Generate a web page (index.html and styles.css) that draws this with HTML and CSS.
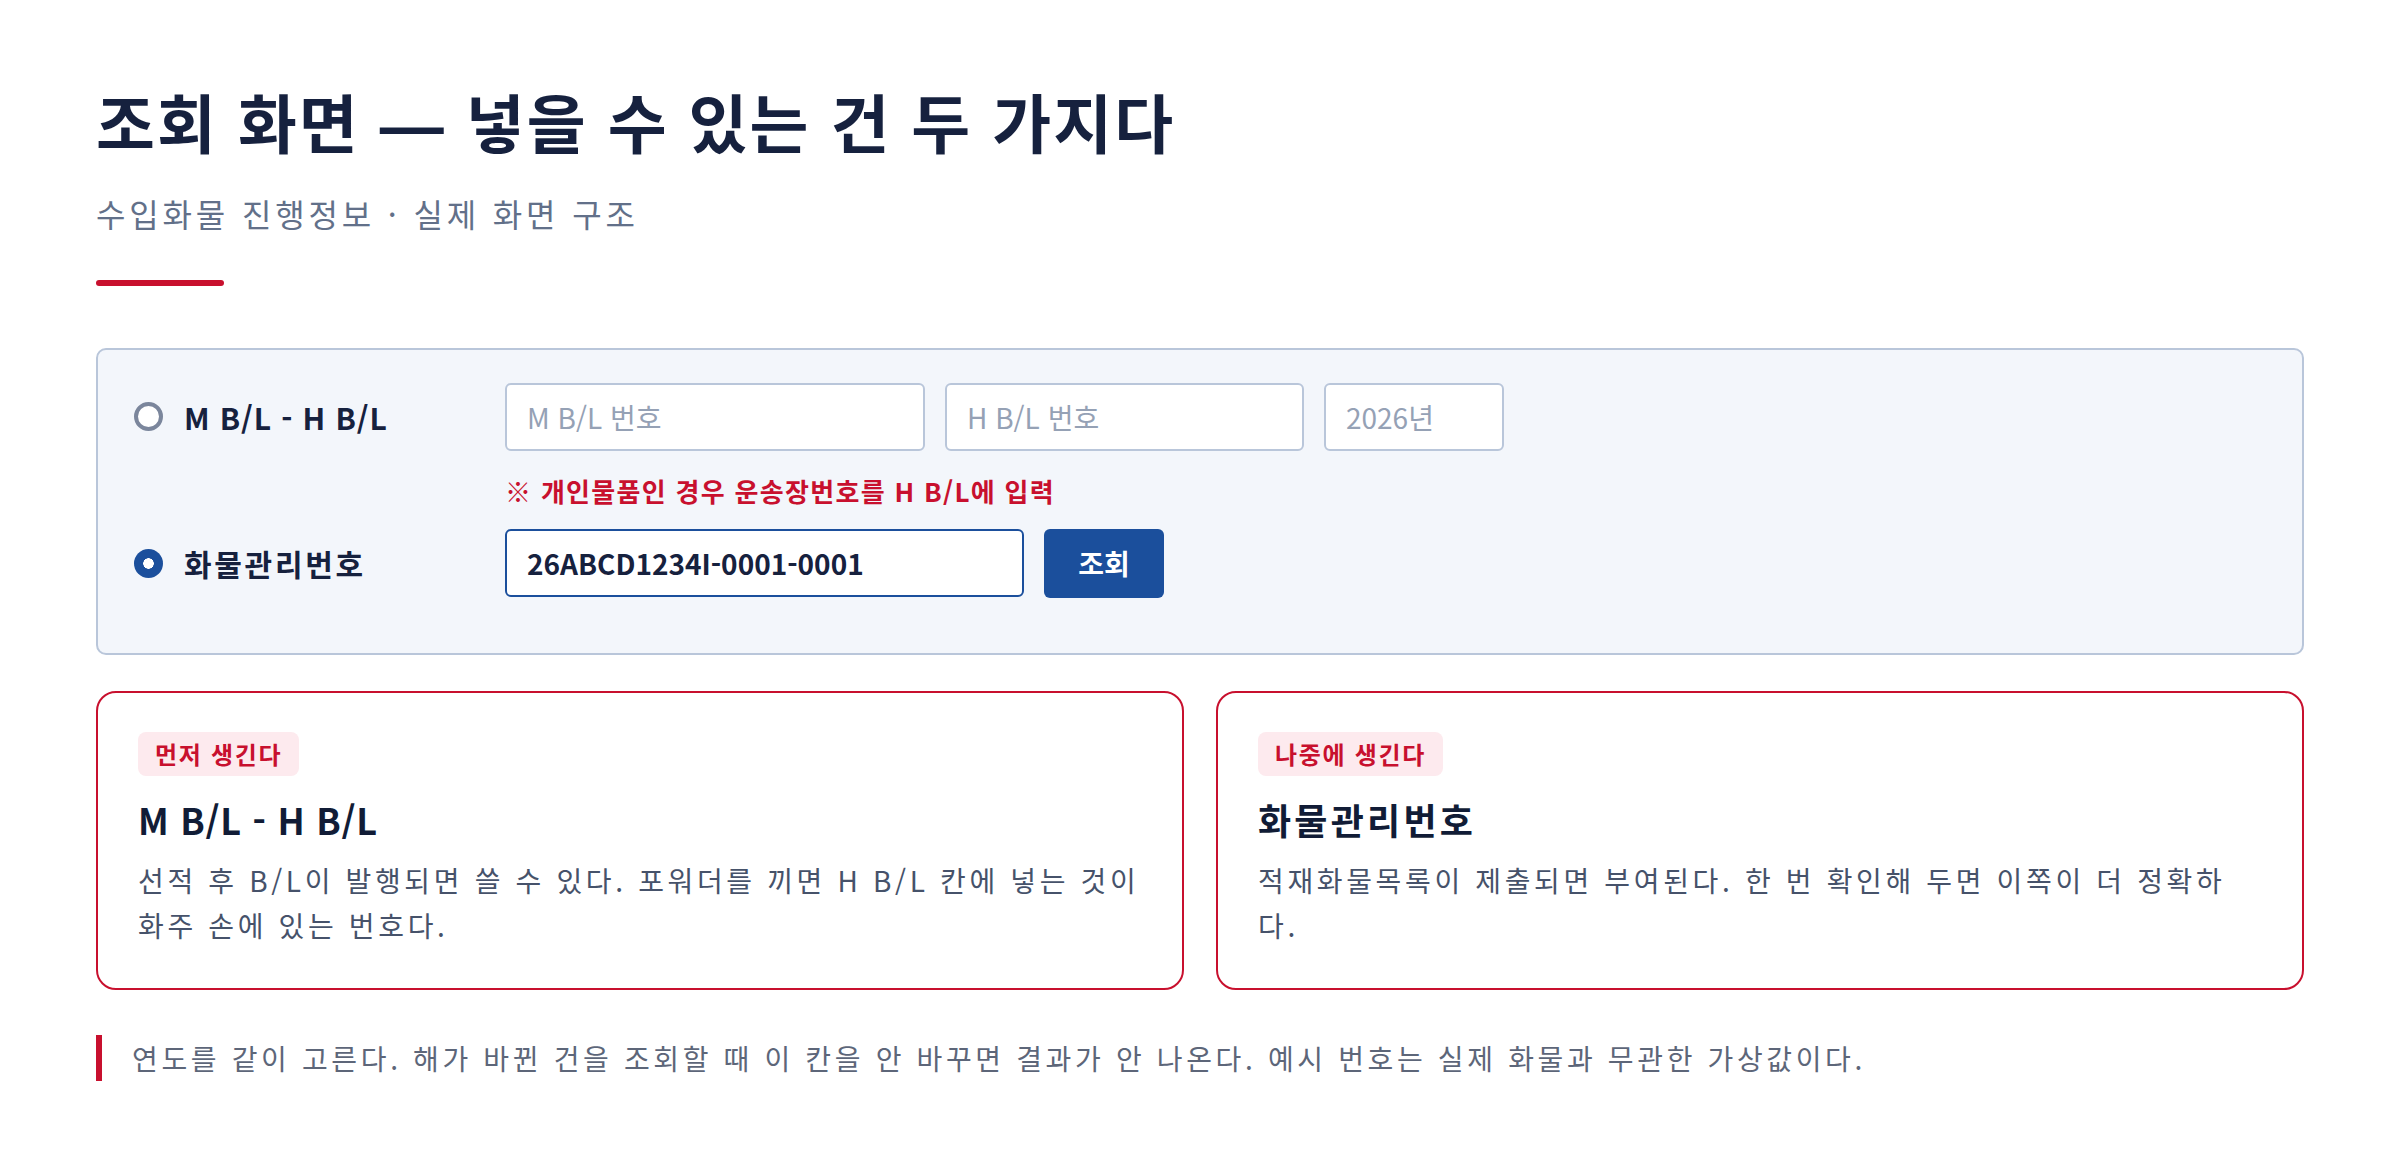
FILE: index.html
```html
<!DOCTYPE html>
<html lang="ko">
<head>
<meta charset="utf-8">
<title>조회 화면</title>
<link rel="stylesheet" href="styles.css">
</head>
<body>
<main class="page">
  <header class="head">
    <h1 class="title">조회 화면 — 넣을 수 있는 건 두 가지다</h1>
    <p class="subtitle">수입화물 진행정보 · 실제 화면 구조</p>
    <div class="rule"></div>
  </header>

  <section class="search">
    <div class="opt"><span class="radio"></span><span class="opt-label">M B/L - H B/L</span></div>
    <div class="fields">
      <input class="field field-mbl" type="text" placeholder="M B/L 번호">
      <input class="field field-hbl" type="text" placeholder="H B/L 번호">
      <input class="field field-year" type="text" placeholder="2026년">
    </div>

    <div></div>
    <p class="hint">※ 개인물품인 경우 운송장번호를 H B/L에 입력</p>

    <div class="opt"><span class="radio is-checked"></span><span class="opt-label opt-label-ko">화물관리번호</span></div>
    <div class="fields">
      <input class="field field-cargo" type="text" value="26ABCD1234I-0001-0001">
      <button class="btn" type="button">조회</button>
    </div>
  </section>

  <section class="cards">
    <article class="card">
      <span class="badge">먼저 생긴다</span>
      <h2 class="card-title">M B/L - H B/L</h2>
      <p class="card-text">선적 후 B/L이 발행되면 쓸 수 있다. 포워더를 끼면 H B/L 칸에 넣는 것이 화주 손에 있는 번호다.</p>
    </article>
    <article class="card">
      <span class="badge">나중에 생긴다</span>
      <h2 class="card-title card-title-ko">화물관리번호</h2>
      <p class="card-text">적재화물목록이 제출되면 부여된다. 한 번 확인해 두면 이쪽이 더 정확하다.</p>
    </article>
  </section>

  <p class="footnote">연도를 같이 고른다. 해가 바뀐 건을 조회할 때 이 칸을 안 바꾸면 결과가 안 나온다. 예시 번호는 실제 화물과 무관한 가상값이다.</p>
</main>
</body>
</html>
```

FILE: styles.css
```css
* {
  box-sizing: border-box;
}

html, body {
  margin: 0;
  background: #ffffff;
}

body {
  font-family: "Noto Sans CJK KR", "Noto Sans", sans-serif;
  color: #16213e;
}

.page {
  padding: 88px 96px 40px;
}

/* heading block */
.title {
  margin: 0;
  font-family: "Liberation Sans", "Noto Sans CJK KR", sans-serif;
  font-size: 64px;
  line-height: 1.2;
  font-weight: 700;
  letter-spacing: 0.033em;
  color: #16213e;
}

.subtitle {
  margin: 26px 0 0;
  font-size: 32px;
  line-height: 1.4;
  font-weight: 400;
  letter-spacing: 0.12em;
  color: #627089;
}

.rule {
  width: 128px;
  height: 6px;
  margin-top: 44px;
  border-radius: 3px;
  background: #c8102e;
}

/* search panel */
.search {
  margin-top: 62px;
  display: grid;
  grid-template-columns: 371px 1fr;
  align-items: center;
  padding: 33px 36px 55px;
  background: #f3f6fb;
  border: 2px solid #b9c6da;
  border-radius: 10px;
}

.opt {
  display: flex;
  align-items: center;
  gap: 21px;
}

.opt-label {
  font-size: 30px;
  font-weight: 700;
  letter-spacing: 0.03em;
  color: #16213e;
}

.opt-label-ko {
  letter-spacing: 0.09em;
}

.radio {
  width: 29px;
  height: 29px;
  border-radius: 50%;
  border: 4px solid #7b869c;
  background: #ffffff;
  flex: none;
}

.radio.is-checked {
  border: none;
  background: radial-gradient(circle, #ffffff 0 5px, #1b4f9c 5.5px 100%);
}

.fields {
  display: flex;
  gap: 20px;
}

.field {
  height: 68px;
  padding: 0 20px;
  border: 2px solid #b9c6da;
  border-radius: 6px;
  background: #ffffff;
  font-family: inherit;
  font-size: 28px;
  color: #16213e;
  outline: none;
}

.field::placeholder {
  color: #95a1b5;
}

.field-mbl { width: 420px; }
.field-hbl { width: 359px; }
.field-year { width: 180px; }

.field-cargo {
  width: 519px;
  border-color: #1b4f9c;
  font-weight: 700;
}

.btn {
  width: 120px;
  height: 69px;
  border: none;
  border-radius: 6px;
  background: #1b4f9c;
  color: #ffffff;
  font-family: inherit;
  font-size: 28px;
  font-weight: 700;
}

.hint {
  margin: 0;
  padding: 22px 0 20px;
  font-size: 26px;
  line-height: 36px;
  font-weight: 700;
  letter-spacing: 0.05em;
  color: #c8102e;
}

/* comparison cards */
.cards {
  margin-top: 36px;
  display: grid;
  grid-template-columns: 1fr 1fr;
  gap: 32px;
}

.card {
  padding: 39px 40px 40px;
  border: 2px solid #c8102e;
  border-radius: 20px;
  background: #ffffff;
}

.badge {
  display: inline-block;
  padding: 6px 17px;
  border-radius: 8px;
  background: #fdeaee;
  color: #c8102e;
  font-size: 24px;
  line-height: 32px;
  font-weight: 700;
  letter-spacing: 0.07em;
}

.card-title {
  margin: 20px 0 0;
  font-size: 36px;
  line-height: 1.3;
  font-weight: 700;
  letter-spacing: 0.02em;
  color: #111c36;
}

.card-title-ko {
  letter-spacing: 0.09em;
}

.card-text {
  margin: 16px 0 0;
  font-size: 28px;
  line-height: 1.6;
  letter-spacing: 0.13em;
  color: #46526a;
}

/* footnote */
.footnote {
  margin: 45px 0 0;
  padding: 2px 0 2px 30px;
  border-left: 6px solid #c8102e;
  font-size: 28px;
  line-height: 42px;
  letter-spacing: 0.13em;
  color: #5d6679;
}
```
